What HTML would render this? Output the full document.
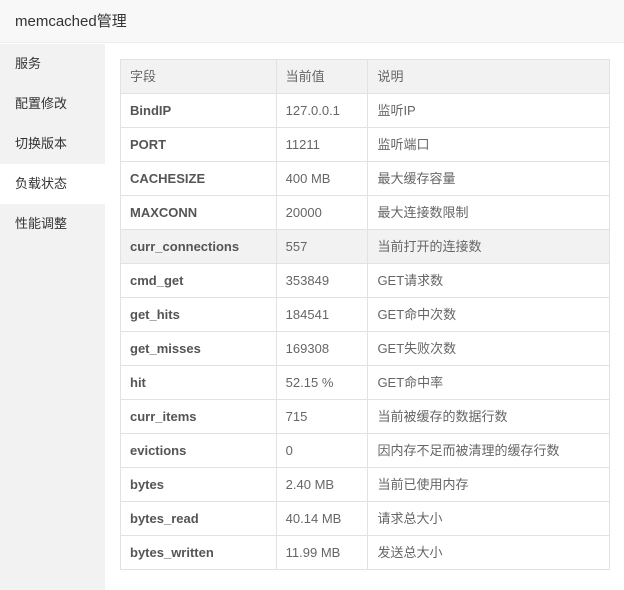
<!DOCTYPE html><html><head><meta charset="utf-8"><style>
body{margin:0;width:624px;height:590px;background:#fff;font-family:"Liberation Sans","Noto Sans CJK SC",sans-serif;color:#666;font-size:13px;position:relative;overflow:hidden}
.hd{position:absolute;left:0;top:0;width:624px;height:43px;background:#f8f8f8;border-bottom:1px solid #eee;font-size:15px;color:#333;line-height:43px;padding-left:15px;box-sizing:border-box}
.sb{position:absolute;left:0;top:44px;width:105px;height:546px;background:#f2f2f2}
.sb div{height:40px;line-height:40px;padding-left:15px;color:#333;font-size:13px}
.sb .on{background:#fff}
table{position:absolute;left:120px;top:59px;border-collapse:collapse;width:490px}
td{border:1px solid #e2e2e2;height:34px;line-height:32px;padding:0 0 0 9px;box-sizing:border-box;font-size:13px;vertical-align:middle;white-space:nowrap}
tr{height:34px}
.h td,.hv td{background:#f2f2f2}
td.b{font-weight:bold;color:#555}
</style></head><body>
<div class="hd">memcached管理</div>
<div class="sb"><div>服务</div><div>配置修改</div><div>切换版本</div><div class="on">负载状态</div><div>性能调整</div></div>
<table>
<colgroup><col style="width:156px"><col style="width:92px"><col style="width:242px"></colgroup>
<tr class="h"><td>字段</td><td>当前值</td><td>说明</td></tr>
<tr><td class="b">BindIP</td><td>127.0.0.1</td><td>监听IP</td></tr>
<tr><td class="b">PORT</td><td>11211</td><td>监听端口</td></tr>
<tr><td class="b">CACHESIZE</td><td>400 MB</td><td>最大缓存容量</td></tr>
<tr><td class="b">MAXCONN</td><td>20000</td><td>最大连接数限制</td></tr>
<tr class="hv"><td class="b">curr_connections</td><td>557</td><td>当前打开的连接数</td></tr>
<tr><td class="b">cmd_get</td><td>353849</td><td>GET请求数</td></tr>
<tr><td class="b">get_hits</td><td>184541</td><td>GET命中次数</td></tr>
<tr><td class="b">get_misses</td><td>169308</td><td>GET失败次数</td></tr>
<tr><td class="b">hit</td><td>52.15 %</td><td>GET命中率</td></tr>
<tr><td class="b">curr_items</td><td>715</td><td>当前被缓存的数据行数</td></tr>
<tr><td class="b">evictions</td><td>0</td><td>因内存不足而被清理的缓存行数</td></tr>
<tr><td class="b">bytes</td><td>2.40 MB</td><td>当前已使用内存</td></tr>
<tr><td class="b">bytes_read</td><td>40.14 MB</td><td>请求总大小</td></tr>
<tr><td class="b">bytes_written</td><td>11.99 MB</td><td>发送总大小</td></tr>
</table>
</body></html>
